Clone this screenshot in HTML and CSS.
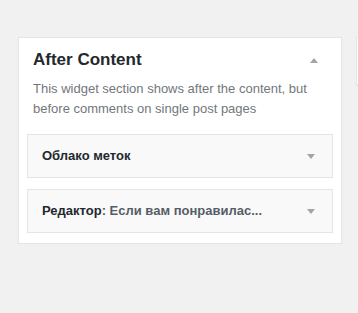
FILE: index.html
```html
<!DOCTYPE html>
<html lang="ru">
	<head>
		<meta charset="UTF-8" />
		<meta name="viewport" content="width=device-width, initial-scale=1.0" />
		<title>Widgets</title>
		<link rel="stylesheet" href="styles.css">
	</head>
	<body>
		<div class="sidebars">
			<div class="sidebar">
				<div class="sidebar-head">
					<h2 class="sidebar-name">After Content</h2>
					<span class="arrow arrow-up"></span>
				</div>
				<p class="sidebar-desc">
					This widget section shows after the content, but before comments on single post pages
				</p>
				<div class="widget">
					<h3 class="widget-title">Облако меток</h3>
					<span class="arrow arrow-down"></span>
				</div>
				<div class="widget">
					<h3 class="widget-title">Редактор<span class="in-title">: Если вам понравилас...</span></h3>
					<span class="arrow arrow-down"></span>
				</div>
			</div>
			<div class="sidebar sidebar-next"></div>
		</div>
	</body>
</html>
```

FILE: styles.css
```css
*,
*::before,
*::after {
	box-sizing: border-box;
}
body {
	margin: 0;
	background-color: #f1f1f1;
	color: #23282d;
	font-family: 'Liberation Sans', Arial, sans-serif;
	overflow: hidden;
}
.sidebars {
	display: flex;
	align-items: flex-start;
	gap: 14px;
	padding: 37px 0 0 18px;
	overflow: hidden;
}
.sidebar {
	flex: 0 0 324px;
	background-color: #ffffff;
	border: 1px solid #e5e5e5;
	box-shadow: 0 1px 1px rgba(0, 0, 0, 0.04);
	padding: 12px 8px 10px;
}
.sidebar-next {
	flex: 0 0 40px;
	height: 48px;
}
.sidebar-head {
	display: flex;
	align-items: center;
	justify-content: space-between;
	padding: 0 15px 0 6px;
}
.sidebar-name {
	margin: 0;
	font-size: 17px;
	line-height: 20px;
	font-weight: 700;
}
.sidebar-desc {
	margin: 9px 0 15px;
	padding: 0 6px;
	font-size: 13px;
	line-height: 20px;
	color: #72777c;
}
.widget {
	display: flex;
	align-items: center;
	justify-content: space-between;
	height: 44px;
	background-color: #f9f9f9;
	border: 1px solid #e5e5e5;
	padding: 0 17px 0 14px;
	margin-bottom: 11px;
}
.widget:last-child {
	margin-bottom: 0;
}
.widget-title {
	margin: 0;
	font-size: 13px;
	font-weight: 700;
	line-height: 20px;
	color: #23282d;
}
.in-title {
	color: #555d66;
}
.arrow {
	width: 0;
	height: 0;
	border-left: 4px solid transparent;
	border-right: 4px solid transparent;
}
.arrow-up {
	border-bottom: 5px solid #a0a5aa;
}
.arrow-down {
	border-top: 5px solid #a0a5aa;
}
```
